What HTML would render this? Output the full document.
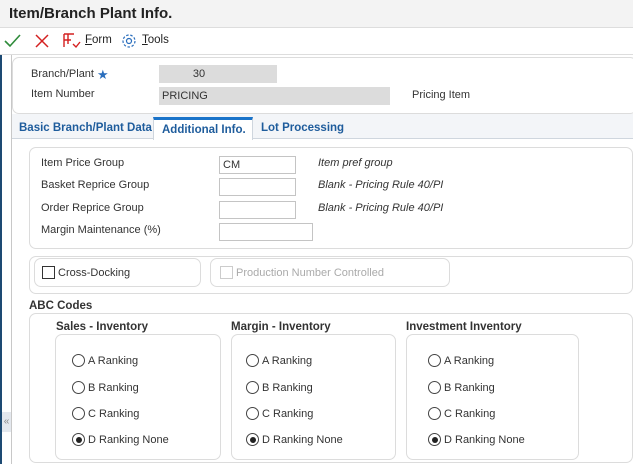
<!DOCTYPE html>
<html><head><style>
*{box-sizing:border-box;margin:0;padding:0}
body{width:633px;height:464px;overflow:hidden;background:#fff;font-family:"Liberation Sans",Arial,sans-serif;font-size:11px;color:#333;position:relative}
.a{position:absolute;white-space:nowrap}
.box{position:absolute;border:1px solid #dcdcdc;border-radius:7px;background:#fff}
.inp{position:absolute;border:1px solid #c4c4c4;background:#fff;height:18px}
.gray{position:absolute;background:#dcdcdc;height:18px}
.rad{position:absolute;width:13px;height:13px;border:1px solid #444;border-radius:50%;background:#fff}
.rad.on::after{content:"";position:absolute;left:2.5px;top:2.5px;width:6px;height:6px;border-radius:50%;background:#222}
.it{font-style:italic}
.tab{position:absolute;top:122px;font-weight:bold;color:#1e5c9c;font-size:11.5px}
</style></head><body>
<div class="a" style="left:0;top:0;width:633px;height:28px;background:#f3f3f3;border-bottom:1px solid #ddd"></div>
<div class="a" style="left:9px;top:5px;font-size:15px;font-weight:bold;color:#222">Item/Branch Plant Info.</div>
<div class="a" style="left:0;top:29px;width:633px;height:26px;background:#fff;border-bottom:1px solid #ddd"></div>
<svg class="a" style="left:4px;top:33px" width="18" height="16"><path d="M1 8 L6 13 L16 2" fill="none" stroke="#2e8b3a" stroke-width="1.6"/></svg>
<svg class="a" style="left:34px;top:33px" width="16" height="16"><path d="M2 2 L14 14 M14 2 L2 14" fill="none" stroke="#d42020" stroke-width="1.5"/></svg>
<svg class="a" style="left:62px;top:32px" width="20" height="18"><path d="M2 2 H12 M2 2 V15 M2 8 H9 M6 2 V12" fill="none" stroke="#d42020" stroke-width="1.4"/><path d="M11 12 L14 15 L18 10" fill="none" stroke="#d42020" stroke-width="1.4"/></svg>
<div class="a" style="left:85px;top:34px;font-size:11.5px;color:#222"><u>F</u>orm</div>
<svg class="a" style="left:121px;top:33px" width="16" height="16"><circle cx="8" cy="8" r="2.5" fill="none" stroke="#2a6ebd" stroke-width="1.2"/><circle cx="8" cy="8" r="6" fill="none" stroke="#2a6ebd" stroke-width="1.2" stroke-dasharray="2.5 1.7"/></svg>
<div class="a" style="left:142px;top:34px;font-size:11.5px;color:#222"><u>T</u>ools</div>
<div class="a" style="left:0;top:55px;width:2px;height:409px;background:#1d4a73"></div>
<div class="a" style="left:11px;top:55px;width:1px;height:409px;background:#c8c8c8"></div>
<div class="a" style="left:2px;top:412px;width:9px;height:20px;background:#e4e8ee;color:#888;font-size:10px;line-height:20px;text-align:center">«</div>
<div class="box" style="left:12px;top:57px;width:625px;height:57px"></div>
<div class="a" style="left:31px;top:68px">Branch/Plant</div>
<div class="a" style="left:97px;top:67px;color:#2a6ebd;font-size:13px">★</div>
<div class="gray" style="left:159px;top:65px;width:118px;text-align:center;line-height:18px;padding-right:38px">30</div>
<div class="a" style="left:31px;top:88px">Item Number</div>
<div class="gray" style="left:159px;top:87px;width:231px;line-height:18px;padding-left:3px">PRICING</div>
<div class="a" style="left:412px;top:89px">Pricing Item</div>
<div class="a" style="left:12px;top:114px;width:621px;height:25px;background:#f3f5f8;border-bottom:1px solid #cfd6de"></div>
<div class="tab" style="left:19px">Basic Branch/Plant Data</div>
<div class="a" style="left:153px;top:117px;width:100px;height:23px;background:#fff;border-top:3px solid #1a73c9;border-left:1px solid #cfd6de;border-right:1px solid #cfd6de"></div>
<div class="tab" style="left:162px;top:124px">Additional Info.</div>
<div class="tab" style="left:261px">Lot Processing</div>
<div class="box" style="left:29px;top:147px;width:604px;height:102px"></div>
<div class="a" style="left:41px;top:157px">Item Price Group</div>
<div class="a" style="left:41px;top:179px">Basket Reprice Group</div>
<div class="a" style="left:41px;top:202px">Order Reprice Group</div>
<div class="a" style="left:41px;top:224px">Margin Maintenance (%)</div>
<div class="inp" style="left:219px;top:156px;width:77px;line-height:17px;padding-left:3px">CM</div>
<div class="inp" style="left:219px;top:178px;width:77px"></div>
<div class="inp" style="left:219px;top:201px;width:77px"></div>
<div class="inp" style="left:219px;top:223px;width:94px"></div>
<div class="a it" style="left:318px;top:157px">Item pref group</div>
<div class="a it" style="left:318px;top:179px">Blank - Pricing Rule 40/PI</div>
<div class="a it" style="left:318px;top:202px">Blank - Pricing Rule 40/PI</div>
<div class="box" style="left:29px;top:256px;width:604px;height:38px"></div>
<div class="box" style="left:34px;top:258px;width:167px;height:29px"></div>
<div class="a" style="left:42px;top:266px;width:13px;height:13px;border:1px solid #333"></div>
<div class="a" style="left:58px;top:267px">Cross-Docking</div>
<div class="box" style="left:210px;top:258px;width:240px;height:29px"></div>
<div class="a" style="left:220px;top:266px;width:13px;height:13px;border:1px solid #ccc"></div>
<div class="a" style="left:236px;top:267px;color:#aaa">Production Number Controlled</div>
<div class="a" style="left:29px;top:300px;font-weight:bold;font-size:11.5px">ABC Codes</div>
<div class="box" style="left:29px;top:313px;width:604px;height:150px"></div>
<div class="a" style="left:56px;top:321px;font-weight:bold;font-size:11.5px">Sales - Inventory</div>
<div class="box" style="left:55px;top:334px;width:166px;height:126px"></div>
<div class="a" style="left:231px;top:321px;font-weight:bold;font-size:11.5px">Margin - Inventory</div>
<div class="box" style="left:231px;top:334px;width:165px;height:126px"></div>
<div class="a" style="left:406px;top:321px;font-weight:bold;font-size:11.5px">Investment Inventory</div>
<div class="box" style="left:406px;top:334px;width:173px;height:126px"></div>

<div class="rad" style="left:72px;top:354px"></div><div class="a" style="left:88px;top:355px">A Ranking</div>
<div class="rad" style="left:72px;top:381px"></div><div class="a" style="left:88px;top:382px">B Ranking</div>
<div class="rad" style="left:72px;top:407px"></div><div class="a" style="left:88px;top:408px">C Ranking</div>
<div class="rad on" style="left:72px;top:433px"></div><div class="a" style="left:88px;top:434px">D Ranking None</div>

<div class="rad" style="left:246px;top:354px"></div><div class="a" style="left:262px;top:355px">A Ranking</div>
<div class="rad" style="left:246px;top:381px"></div><div class="a" style="left:262px;top:382px">B Ranking</div>
<div class="rad" style="left:246px;top:407px"></div><div class="a" style="left:262px;top:408px">C Ranking</div>
<div class="rad on" style="left:246px;top:433px"></div><div class="a" style="left:262px;top:434px">D Ranking None</div>

<div class="rad" style="left:428px;top:354px"></div><div class="a" style="left:444px;top:355px">A Ranking</div>
<div class="rad" style="left:428px;top:381px"></div><div class="a" style="left:444px;top:382px">B Ranking</div>
<div class="rad" style="left:428px;top:407px"></div><div class="a" style="left:444px;top:408px">C Ranking</div>
<div class="rad on" style="left:428px;top:433px"></div><div class="a" style="left:444px;top:434px">D Ranking None</div>
</body></html>
